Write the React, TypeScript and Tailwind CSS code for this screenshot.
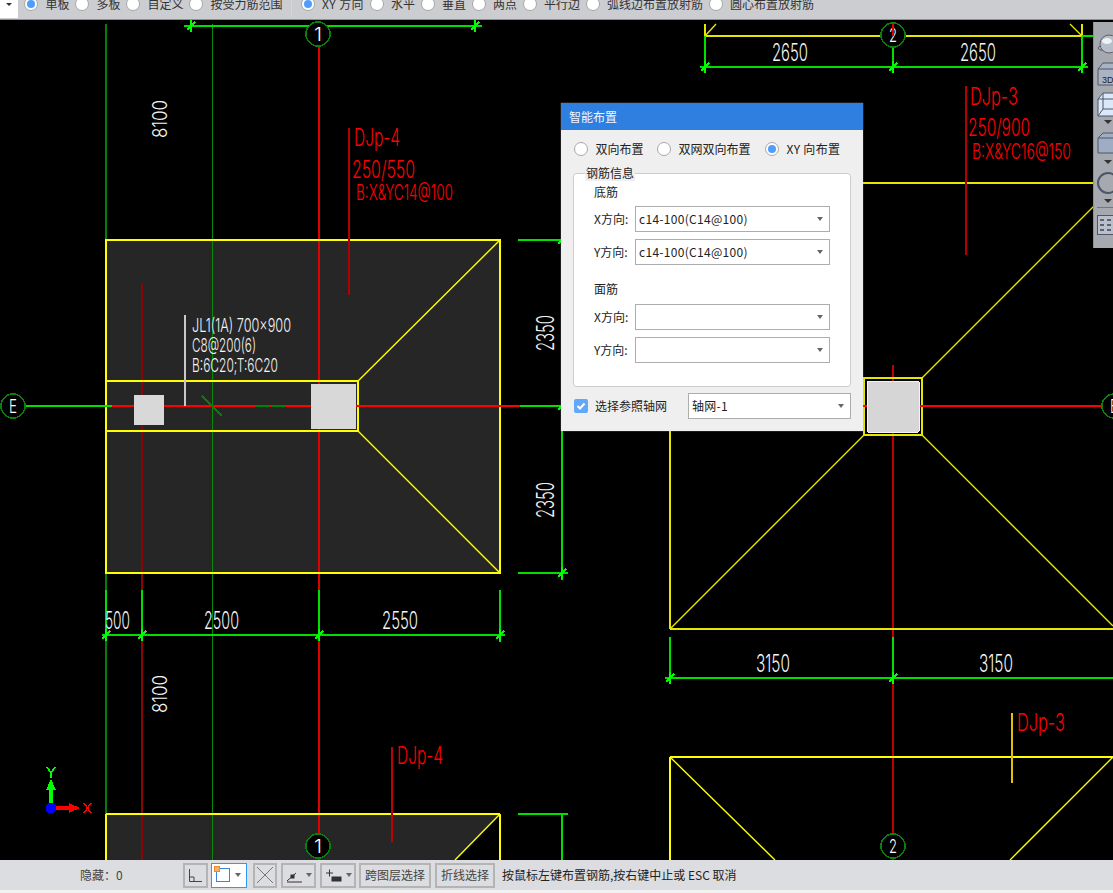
const uiFont = "font-['Noto_Sans_CJK_SC','Liberation_Sans',sans-serif]";

const Radio = ({ label, checked }: { label: string; checked?: boolean }) => (
  <label className="flex items-center gap-[7.5px] whitespace-nowrap">
    <span className="flex h-[14px] w-[14px] items-center justify-center rounded-full border border-[#a8a8a8] bg-white">
      {checked && <span className="h-[8px] w-[8px] rounded-full bg-[#4f9dff]" />}
    </span>
    {label}
  </label>
);

const Arrow = () => (
  <span className="h-0 w-0 border-x-[3px] border-t-[4px] border-x-transparent border-t-[#666]" />
);

const DownMark = () => (
  <span className="ml-[7px] block h-0 w-0 border-x-[4px] border-t-[4px] border-x-transparent border-t-[#333]" />
);

const Select = ({ value, className }: { value?: string; className: string }) => (
  <div className={`flex h-[26px] items-center justify-between border border-[#adadad] bg-white pl-[3px] pr-[6px] text-[12px] tracking-[0.3px] text-[#222] ${className}`}>
    <span>{value}</span>
    <Arrow />
  </div>
);

const Field = ({ label, value }: { label: string; value?: string }) => (
  <div className="flex items-center">
    <span className="w-[41px] text-[12px]">{label}</span>
    <Select value={value} className="w-[195px]" />
  </div>
);

const ToolButton = ({ children, className }: { children: React.ReactNode; className: string }) => (
  <div className={`flex h-[25px] items-center justify-center border-2 border-[#b4b4b4] bg-[#dcdde0] ${className}`}>
    {children}
  </div>
);

// CAD text: squeezed to a fixed width like the single line font in the drawing
const Cad = (p: { x: number; y: number; w: number; size: number; fill?: string; text: string; rotate?: boolean }) => (
  <text
    x={p.x}
    y={p.y}
    fontSize={p.size}
    fontWeight={300}
    fill={p.fill ?? "#f4f4f4"}
    fontFamily="Inter, 'Liberation Sans', sans-serif"
    textLength={p.w}
    lengthAdjust="spacingAndGlyphs"
    transform={p.rotate ? `rotate(-90 ${p.x} ${p.y})` : undefined}
  >
    {p.text}
  </text>
);

const Tick = ({ x, y, c = "#00ff00" }: { x: number; y: number; c?: string }) => (
  <path d={`M${x - 4} ${y + 4}L${x + 4} ${y - 4}M${x} ${y - 6}V${y + 6}`} stroke={c} strokeWidth="1.5" />
);

const Axis = ({ x, y, text }: { x: number; y: number; text: string }) => (
  <g>
    <circle cx={x} cy={y} r="12" fill="#000" stroke="#0b7f0b" strokeWidth="1.5" />
    <Cad x={x - 4} y={y + 7} w={8} size={19} text={text} fill="#ffffff" />
  </g>
);

const Drawing = () => (
  <svg className="block h-full w-full" viewBox="0 20 1113 840" fill="none" shapeRendering="crispEdges">
    {/* left footing */}
    <rect x="106" y="240" width="394" height="333" fill="#262626" />
    <path d="M106 814H500L455 860H106Z" fill="#262626" />
    <path d="M106 24V815" stroke="#067d06" strokeWidth="2" />
    <path d="M212.5 24V860" stroke="#068a06" />
    <path d="M142 283V860" stroke="#8a0505" strokeWidth="2" />
    <path d="M319 44V860" stroke="#e00000" strokeWidth="2" />
    <path d="M106 240H500V573H106ZM106 381H358V431H106Z" stroke="#ffff00" strokeWidth="2" />
    <path d="M358 381L500 240M358 431L500 573" stroke="#ffff00" strokeWidth="1.4" shapeRendering="auto" />
    <path d="M0 406H112" stroke="#00e000" strokeWidth="2" />
    <path d="M112 406H520" stroke="#ff0000" strokeWidth="2" />
    <path d="M520 406H562" stroke="#00e000" strokeWidth="2" />
    <path d="M202 396L222 416M255 406H270M272 406H285" stroke="#067d06" strokeWidth="2" />
    <path d="M185 315V406" stroke="#c8c8c8" strokeWidth="2" />
    <rect x="134" y="395" width="30" height="30" rx="1" fill="#d8d8d8" />
    <rect x="311" y="384" width="45" height="45" rx="1" fill="#d8d8d8" />
    <Cad x={192} y={332} w={99} size={19} text="JL1(1A) 700x900" />
    <Cad x={192} y={352} w={64} size={19} text="C8@200(6)" />
    <Cad x={192} y={372} w={86} size={19} text="B:6C20;T:6C20" />
    <Axis x={13} y={406} text="E" />

    {/* dims around left footing */}
    <path d="M184 26H482" stroke="#00e000" strokeWidth="2" />
    <Tick x={191} y={26} />
    <Tick x={475} y={26} />
    <Axis x={318} y={34} text="1" />
    <path d="M518 240H568M518 573H568M562 240V580M106 590V640M142 590V640M319 590V640M500 590V642M102 635H505" stroke="#00e000" strokeWidth="2" />
    <Tick x={562} y={240} />
    <Tick x={562} y={406} />
    <Tick x={562} y={573} />
    <Tick x={106} y={635} />
    <Tick x={142} y={635} />
    <Tick x={319} y={635} />
    <Tick x={500} y={635} />
    <Cad x={554} y={351} w={36} size={24} text="2350" rotate />
    <Cad x={554} y={518} w={36} size={24} text="2350" rotate />
    <Cad x={167} y={138} w={38} size={20} text="8100" rotate />
    <Cad x={167} y={713} w={38} size={20} text="8100" rotate />
    <Cad x={105} y={629} w={25} size={24} text="500" />
    <Cad x={204} y={629} w={35} size={24} text="2500" />
    <Cad x={382} y={629} w={36} size={24} text="2550" />

    <path d="M349 128V295" stroke="#b00000" strokeWidth="2" />
    <Cad x={354} y={146} w={46} size={24} fill="#ff0000" text="DJp-4" />
    <Cad x={352} y={178} w={63} size={24} fill="#ff0000" text="250/550" />
    <Cad x={356} y={200} w={97} size={22} fill="#ff0000" text="B:X&YC14@100" />

    {/* lower left */}
    <path d="M106 814H500M106 814V860M500 814V860" stroke="#ffff00" strokeWidth="2" />
    <path d="M500 814L455 860" stroke="#ffff00" strokeWidth="1.4" shapeRendering="auto" />
    <path d="M518 814H568M562 814V860" stroke="#00e000" strokeWidth="2" />
    <path d="M392 747V842" stroke="#c00000" strokeWidth="2" />
    <Cad x={397} y={764} w={46} size={24} fill="#ff0000" text="DJp-4" />
    <Axis x={318} y={846} text="1" />

    {/* right footing */}
    <path d="M893 365V860" stroke="#c00000" strokeWidth="2" />
    <path d="M705 24V36H1082V24M863 183H1095M864 378H922V435H864ZM670 629H1113M670 431V629" stroke="#e6e600" strokeWidth="2" />
    <path d="M705 36L716 24M1082 36L1070 24M922 378L1095 205M864 435L670 629M922 435L1113 626" stroke="#e6e600" strokeWidth="1.4" shapeRendering="auto" />
    <path d="M705 36V72M893 44V72M1082 36V72M1082 36H1095M700 67H1088M670 637V684M893 637V684M665 678H1113" stroke="#00e000" strokeWidth="2" />
    <Tick x={705} y={67} />
    <Tick x={893} y={67} />
    <Tick x={1082} y={67} />
    <Tick x={670} y={678} />
    <Tick x={893} y={678} />
    <Axis x={893} y={35} text="2" />
    <path d="M893 24V36" stroke="#e00000" strokeWidth="2" />
    <Cad x={772} y={61} w={36} size={24} text="2650" />
    <Cad x={960} y={61} w={36} size={24} text="2650" />
    <Cad x={756} y={672} w={34} size={24} text="3150" />
    <Cad x={979} y={672} w={34} size={24} text="3150" />
    <path d="M863 406H1113" stroke="#ff0000" strokeWidth="2" />
    <rect x="867" y="381" width="52" height="51" rx="1" fill="#d6d6d6" stroke="#f4f4f4" />
    <Axis x={1114} y={406} text="E" />
    <path d="M966 86V255" stroke="#b00000" strokeWidth="2" />
    <Cad x={970} y={105} w={48} size={24} fill="#ff0000" text="DJp-3" />
    <Cad x={968} y={136} w={62} size={24} fill="#ff0000" text="250/900" />
    <Cad x={972} y={159} w={99} size={22} fill="#ff0000" text="B:X&YC16@150" />

    {/* lower right */}
    <path d="M670 757H1113M670 757V860" stroke="#ffff00" strokeWidth="2" />
    <path d="M670 757L775 860M1113 757L1010 860" stroke="#ffff00" strokeWidth="1.4" shapeRendering="auto" />
    <path d="M1012 713V783" stroke="#e0c000" strokeWidth="2" />
    <Cad x={1017} y={731} w={48} size={24} fill="#ff0000" text="DJp-3" />
    <Axis x={893} y={846} text="2" />

    {/* ucs icon */}
    <path d="M51 808V788" stroke="#00ff00" strokeWidth="4" />
    <path d="M51 779L56 790H46Z" fill="#00ff00" />
    <path d="M47 767L51 773L55 767M51 773V778" stroke="#00ff00" strokeWidth="1.5" />
    <path d="M51 808H72" stroke="#ff0000" strokeWidth="4" />
    <path d="M80 808L69 803V813Z" fill="#ff0000" />
    <circle cx="51" cy="808" r="5.5" fill="#0000ff" />
    <path d="M84 803L91 813M91 803L84 813" stroke="#ff0000" strokeWidth="1.5" />
  </svg>
);

const SideTools = () => (
  <div className="absolute right-0 top-[2px] flex h-[226px] w-[20px] flex-col items-start overflow-hidden border-l border-[#8d9097] bg-[#a6a9af] pl-[3px] pt-[12px]">
    <svg width="22" height="20" viewBox="0 0 22 20" className="shrink-0">
      <ellipse cx="11" cy="14" rx="10" ry="3" fill="none" stroke="#59606d" />
      <circle cx="12" cy="10" r="9" fill="#b8bec9" stroke="#59606d" />
      <ellipse cx="10" cy="7" rx="5" ry="3" fill="#eef1f6" />
    </svg>
    <svg width="22" height="24" viewBox="0 0 22 24" className="mt-[8px] shrink-0">
      <path d="M1 7L6 1H22V23H1Z" fill="#a9b3c4" stroke="#4d5666" />
      <path d="M1 7H22" stroke="#4d5666" />
      <text x="5" y="21" fontSize="9" fill="#222" fontFamily="'Liberation Sans', sans-serif">3D</text>
    </svg>
    <svg width="22" height="26" viewBox="0 0 22 26" className="mt-[6px] shrink-0">
      <path d="M1 7L6 1H22V24H1Z" fill="#dbe8fb" stroke="#4d5666" />
      <path d="M1 7H22M6 1V17H22M1 24L6 17" stroke="#4d5666" fill="none" />
    </svg>
    <span className="mt-[2px]"><DownMark /></span>
    <svg width="22" height="22" viewBox="0 0 22 22" className="mt-[8px] shrink-0">
      <path d="M1 6L6 1H22V21H1Z" fill="#9fadc4" stroke="#4d5666" />
      <path d="M1 6H22" stroke="#4d5666" />
    </svg>
    <span className="mt-[6px]"><DownMark /></span>
    <svg width="22" height="22" viewBox="0 0 22 22" className="mt-[8px] shrink-0">
      <circle cx="11" cy="11" r="10" fill="none" stroke="#4d5666" strokeWidth="2" />
    </svg>
    <span className="mt-[5px]"><DownMark /></span>
    <span className="mt-[4px] h-px w-full shrink-0 bg-[#777]" />
    <svg width="22" height="20" viewBox="0 0 22 20" className="mt-[7px] shrink-0">
      <rect x="0.5" y="0.5" width="21" height="19" fill="#b9c0cc" stroke="#4d5666" />
      <path d="M3 5H7M3 10H7M3 15H7M10 5H14M10 10H14M10 15H14" stroke="#3b4350" strokeWidth="1.5" />
    </svg>
  </div>
);

const Dialog = () => (
  <div className="absolute left-[561px] top-[83px] flex h-[328px] w-[302px] flex-col bg-[#efefef] text-[12px] text-[#222] shadow-[0_0_1px_#9aa3b5]">
    <div className="flex h-[27px] items-center bg-[#2e7fe0] pl-[8px] text-[#f2f6fd]">智能布置</div>
    <div className="mt-[10px] flex pl-[13px]">
      <div className="w-[83px]"><Radio label="双向布置" /></div>
      <div className="w-[108px]"><Radio label="双网双向布置" /></div>
      <span className="tracking-[0.3px]"><Radio label="XY 向布置" checked /></span>
    </div>
    <div className="relative ml-[12px] mt-[15px] h-[214px] w-[278px] rounded-[4px] border border-[#cdcdcd] bg-white pl-[20px] pt-[9px]">
      <span className="absolute left-[11px] top-[-9px] bg-[#efefef] px-px leading-[16px]">钢筋信息</span>
      <div className="leading-[18px]">底筋</div>
      <div className="mt-[5px] flex flex-col gap-[7px]">
        <Field label="X方向:" value="c14-100(C14@100)" />
        <Field label="Y方向:" value="c14-100(C14@100)" />
      </div>
      <div className="mt-[15px] leading-[18px]">面筋</div>
      <div className="mt-[6px] flex flex-col gap-[7px]">
        <Field label="X方向:" />
        <Field label="Y方向:" />
      </div>
    </div>
    <div className="mt-[6px] flex items-center pl-[13px]">
      <span className="flex h-[14px] w-[14px] items-center justify-center rounded-[2px] bg-[#62a8f8]">
        <svg width="10" height="10" viewBox="0 0 10 10" fill="none">
          <path d="M1.5 5L4 7.5L8.5 2.5" stroke="#fff" strokeWidth="2" />
        </svg>
      </span>
      <span className="ml-[7px] w-[93px]">选择参照轴网</span>
      <Select value="轴网-1" className="w-[163px]" />
    </div>
  </div>
);

const StatusBar = () => (
  <div className="flex h-[30px] shrink-0 items-center bg-[#dcdde0] pl-[80px] text-[12px]">
    <span className="w-[103px] text-[#444]">隐藏：0</span>
    <ToolButton className="w-[25px]">
      <svg width="15" height="15" viewBox="0 0 15 15" fill="none" stroke="#444">
        <path d="M1.5 1V13.5H14M1.5 9H6V13.5" />
      </svg>
    </ToolButton>
    <div className="ml-[3px] flex h-[25px] w-[36px] items-center justify-between border border-[#2d9bf5] bg-white pl-[4px] pr-[5px]">
      <span className="relative h-[14px] w-[14px] border border-[#3a87d8]">
        <span className="absolute left-[-3px] top-[-3px] h-[6px] w-[6px] border border-[#e88a2e] bg-[#ffb266]" />
      </span>
      <Arrow />
    </div>
    <ToolButton className="ml-[6px] w-[24px] bg-[#c8c9cc]">
      <svg width="18" height="18" viewBox="0 0 18 18" fill="none" stroke="#777">
        <path d="M1 1L17 17M17 1L1 17" />
      </svg>
    </ToolButton>
    <ToolButton className="ml-[4px] w-[35px] gap-[3px]">
      <svg width="17" height="15" viewBox="0 0 17 15" fill="none" stroke="#333">
        <path d="M1 13L10 5M1 14H16" />
        <rect x="5" y="7" width="3" height="3" fill="#333" />
      </svg>
      <Arrow />
    </ToolButton>
    <ToolButton className="ml-[4px] w-[36px] gap-[3px]">
      <svg width="18" height="15" viewBox="0 0 18 15" fill="none" stroke="#333">
        <path d="M1 5H8M4.5 1.5V8.5" />
        <rect x="7" y="9" width="9" height="4" fill="#333" />
      </svg>
      <Arrow />
    </ToolButton>
    <ToolButton className="ml-[3px] w-[72px] bg-[#d0d1d4] text-[#444]">跨图层选择</ToolButton>
    <ToolButton className="ml-[4px] w-[60px] bg-[#d0d1d4] text-[#444]">折线选择</ToolButton>
    <span className="ml-[7px] text-[#222]">按鼠标左键布置钢筋,按右键中止或 ESC 取消</span>
  </div>
);

const App = () => {
  return (
    <div className={`flex h-[893px] w-[1113px] flex-col overflow-hidden bg-black ${uiFont}`}>
      {/* top option bar, cut off by the window edge */}
      <div className="flex h-[20px] shrink-0 items-start overflow-hidden border-b border-[#8f9094] bg-[#cbcdd1] text-[12px] text-[#333]">
        <div className="flex h-[18px] w-[18px] items-start justify-center bg-white pt-[3px]">
          <span className="h-0 w-0 border-x-[3px] border-t-[3px] border-x-transparent border-t-[#333]" />
        </div>
        <div className="-mt-[5px] ml-[6px] flex h-[18px] items-center gap-[5.5px]">
          <Radio label="单板" checked />
          <Radio label="多板" />
          <Radio label="自定义" />
          <Radio label="按受力筋范围" />
          <span className="mx-[3px] h-[25px] w-px bg-[#d6d7da]" />
          <span className="tracking-[0.4px]"><Radio label="XY 方向" checked /></span>
          <Radio label="水平" />
          <Radio label="垂直" />
          <Radio label="两点" />
          <Radio label="平行边" />
          <Radio label="弧线边布置放射筋" />
          <Radio label="圆心布置放射筋" />
        </div>
      </div>
      <div className="relative min-h-0 flex-1">
        <Drawing />
        <SideTools />
        <Dialog />
      </div>
      <StatusBar />
      <div className="h-[3px] shrink-0 bg-[#f2f2f2]" />
    </div>
  );
};

export default App;
